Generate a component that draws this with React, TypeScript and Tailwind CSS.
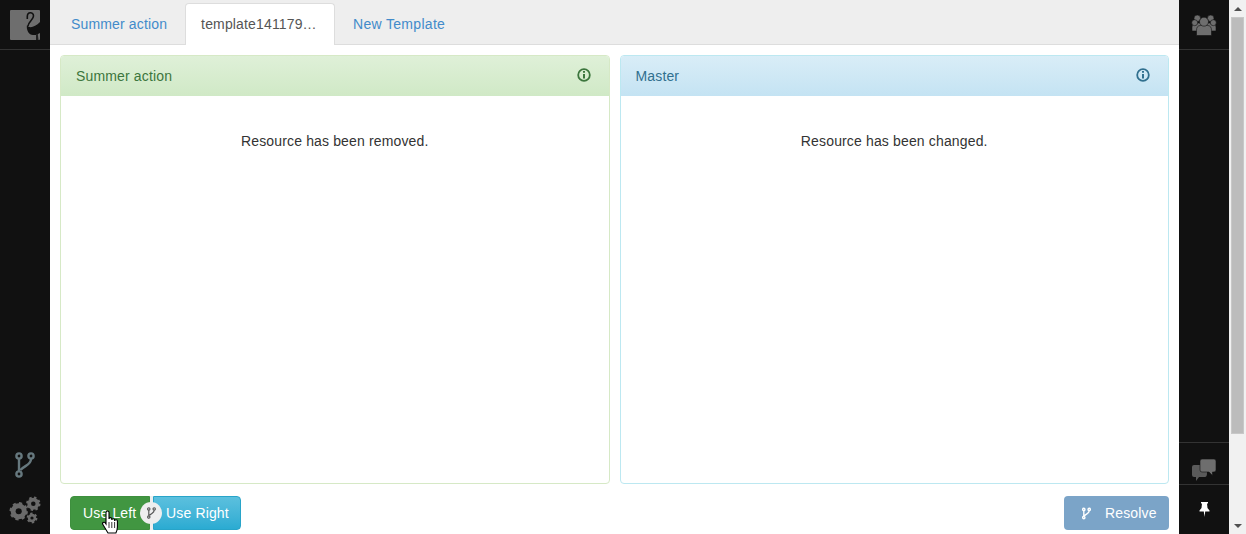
function BranchIcon({ className, weight = 2 }: { className: string; weight?: number }) {
  return (
    <svg viewBox="0 0 20 26" fill="none" stroke="currentColor" strokeWidth={weight} className={className}>
      <circle cx="4" cy="4" r="2.6" />
      <circle cx="16" cy="4" r="2.6" />
      <circle cx="4" cy="22" r="2.6" />
      <path d="M4 7v12M16 7c0 6-6 6-10.500 11" />
    </svg>
  );
}

function Flamingo() {
  return (
    <div className="w-[30px] h-[30px] bg-[#6e6e6e] rounded-[1px] overflow-hidden">
      <svg viewBox="0 0 30 30" className="w-[30px] h-[30px]">
        <path d="M17.300 9V6.500c0-5 6.200-5 6.200-.5 0 3.500-5.500 6-5.500 10" fill="none" stroke="#111" strokeWidth="1.600" />
        <path d="M17 15c2 4 8 2 13-3v11l-4 2h-3c-4 0-7-5-6-10z" fill="#111" />
        <path d="M26 24h1.800l.7 6h-2.500z" fill="#222" />
      </svg>
    </div>
  );
}

function Gear({ x, y, r, teeth }: { x: number; y: number; r: number; teeth: number }) {
  const dash = (2 * Math.PI * r) / (teeth * 2);
  return (
    <g>
      <circle cx={x} cy={y} r={r} fill="#6a6a6a" />
      <circle cx={x} cy={y} r={r} fill="none" stroke="#6a6a6a" strokeWidth="2.400" strokeDasharray={`${dash} ${dash}`} />
      <circle cx={x} cy={y} r={r * 0.38} fill="#111" />
    </g>
  );
}

function GearsIcon() {
  return (
    <svg viewBox="0 0 32 30" className="w-8 h-[30px] mb-[9px]">
      <Gear x={9.700} y={16.300} r={8} teeth={8} />
      <Gear x={24.300} y={8.700} r={6} teeth={8} />
      <Gear x={23} y={23} r={4.200} teeth={6} />
    </svg>
  );
}

function UsersIcon() {
  return (
    <svg viewBox="0 0 26 22" className="w-[26px] h-[22px]" fill="#6e6e6e" stroke="#111" strokeWidth="0.6">
      <circle cx="6.300" cy="4.300" r="3.300" />
      <circle cx="19.700" cy="4.300" r="3.300" />
      <path d="M1 17v-4q0-4 4-4h16q4 0 4 4v4z" />
      <circle cx="3.700" cy="8.700" r="3" />
      <circle cx="22.300" cy="8.700" r="3" />
      <path d="M5.500 21.500v-5q0-5 4-5h7q4 0 4 5v5z" />
      <circle cx="13" cy="7.700" r="4.500" />
    </svg>
  );
}

function CommentsIcon() {
  return (
    <svg viewBox="0 0 24 22" className="w-6 h-[22px] mt-3">
      <path d="M0 8q0-2 2-2h13v8q0 4-2 4H7l-3 4v-4H2q-2 0-2-2z" fill="#5a5a5a" />
      <path d="M8 2q0-2 2-2H22q2 0 2 2v9q0 2-2 2h-1.500v3.500L17 13h-7q-2 0-2-2z" fill="#6e6e6e" stroke="#111" strokeWidth="0.6" />
    </svg>
  );
}

function PinIcon() {
  return (
    <svg viewBox="0 0 11 15" className="w-[11px] h-[15px]" fill="#fff">
      <path d="M2 0h7v1.500H8l.5 4.500 2 2.500v1H6.200L5.500 15l-.7-5.500H.5v-1l2-2.500L3 1.500H2z" />
    </svg>
  );
}

function HandCursor() {
  return (
    <svg viewBox="0 0 17 24" className="absolute left-[32px] top-[14px] w-[17px] h-6" fill="#fff" stroke="#000" strokeWidth="1.100">
      <path d="M4 2.500a1.500 1.500 0 0 1 3 0V9a1.400 1.400 0 0 1 2.800 0v1a1.400 1.400 0 0 1 2.800.2v.8a1.400 1.400 0 0 1 2.800.3V17q0 3-1.500 6H6L.9 14.500a1.400 1.400 0 0 1 2.200-1.800L4 14z" />
      <path d="M7 12v6M9.800 12v6M12.600 12v6" fill="none" strokeWidth="0.800" />
    </svg>
  );
}

function InfoIcon() {
  return (
    <svg viewBox="0 0 14 14" className="w-3.5 h-3.5 -mt-[3px]" fill="none" stroke="currentColor">
      <circle cx="7" cy="7" r="5.800" strokeWidth="1.800" />
      <path d="M7 6v4.500" strokeWidth="2" />
      <path d="M7 3v1.800" strokeWidth="2" />
    </svg>
  );
}

function Panel({ title, message, tone }: { title: string; message: string; tone: 'green' | 'blue' }) {
  const green = tone === 'green';
  return (
    <div className={`flex-1 min-w-0 flex flex-col rounded border bg-white ${green ? 'border-[#d6e9c6]' : 'border-[#bce8f1]'}`}>
      <div
        className={`h-10 shrink-0 flex items-center justify-between pl-[15px] pr-[18px] rounded-t-[3px] ${
          green ? 'bg-gradient-to-b from-[#dff0d8] to-[#d0e9c6] text-[#3c763d]' : 'bg-gradient-to-b from-[#d9edf7] to-[#c4e3f3] text-[#31708f]'
        }`}
      >
        <span>{title}</span>
        <InfoIcon />
      </div>
      <p className="pt-[35px] text-center text-[#333]">{message}</p>
    </div>
  );
}

export default function App() {
  return (
    <div className="flex h-screen overflow-hidden bg-white text-[14px] leading-5 tracking-[0.15px] font-['Liberation_Sans',Arial,sans-serif]">
      <aside className="w-[50px] shrink-0 flex flex-col bg-[#111]">
        <div className="h-[50px] border-b border-[#333] pt-2.5 pl-2.5">
          <Flamingo />
        </div>
        <div className="mt-auto flex flex-col items-center text-[#66787e]">
          <BranchIcon className="w-5 h-[26px] mb-[17px]" weight={2.4} />
          <GearsIcon />
        </div>
      </aside>

      <main className="flex-1 min-w-0 flex flex-col">
        <nav className="h-[45px] shrink-0 flex items-end pl-[5px] bg-[#eee] border-b border-[#ddd]">
          <a className="px-4 h-[41px] pt-[11px] text-[#428bca]">Summer action</a>
          <a className="ml-0.5 w-[150px] h-[42px] -mb-px px-[15px] pt-[10px] text-[#555] bg-white border border-[#ddd] border-b-0 rounded-t truncate">
            template141179…
          </a>
          <a className="ml-0.5 px-4 h-[41px] pt-[11px] text-[#428bca] tracking-[0.3px]">New Template</a>
        </nav>

        <div className="flex-1 min-h-0 flex gap-2.5 pt-2.5 px-2.5">
          <Panel title="Summer action" message="Resource has been removed." tone="green" />
          <Panel title="Master" message="Resource has been changed." tone="blue" />
        </div>

        <div className="h-[50px] shrink-0 flex items-start justify-between pt-3 px-2.5">
          <div className="relative flex ml-2.5 h-[34px] text-white">
            <button className="w-[80px] pl-3 text-left rounded-l bg-[#419641] border border-[#3e8f3e]">Use Left</button>
            <div className="w-[3px] bg-[#eee]" />
            <button className="w-[88px] pl-3 text-left rounded-r bg-gradient-to-b from-[#5bc0de] to-[#2aabd2] border border-[#28a4c9]">Use Right</button>
            <span className="absolute left-[70px] top-[6px] w-[22px] h-[22px] rounded-full bg-[#eee] flex items-center justify-center text-[#555]">
              <BranchIcon className="w-[9px] h-3" weight={2.6} />
            </span>
            <HandCursor />
          </div>
          <button className="w-[105px] h-[34px] flex items-center pl-[18px] gap-[14px] rounded bg-[#7ba4c8] text-white">
            <BranchIcon className="w-[9px] h-[13px]" weight={3} />
            Resolve
          </button>
        </div>
      </main>

      <aside className="w-[50px] shrink-0 flex flex-col bg-[#111]">
        <div className="h-[50px] pt-px flex items-center justify-center border-b border-[#333]">
          <UsersIcon />
        </div>
        <div className="mt-auto h-[42px] flex items-center justify-center border-t border-[#333]">
          <CommentsIcon />
        </div>
        <div className="h-[50px] flex items-center justify-center border-t border-[#333]">
          <PinIcon />
        </div>
      </aside>

      <div className="w-[17px] shrink-0 flex flex-col items-center bg-[#f1f1f1]">
        <div className="h-[17px] shrink-0 flex items-center justify-center">
          <span className="w-0 h-0 border-x-[4px] border-x-transparent border-b-[4px] border-b-[#505050]" />
        </div>
        <div className="w-[13px] h-[417px] bg-[#bcbcbc] border border-[#c8c8c8]" />
        <div className="mt-auto h-[17px] shrink-0 flex items-center justify-center">
          <span className="w-0 h-0 border-x-[4px] border-x-transparent border-t-[4px] border-t-[#505050]" />
        </div>
      </div>
    </div>
  );
}
